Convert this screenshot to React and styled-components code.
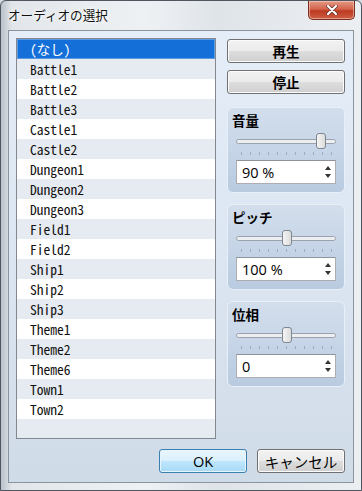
import React from 'react'
import styled, { createGlobalStyle } from 'styled-components'

const GlobalStyle = createGlobalStyle`
  html, body {
    margin: 0;
    padding: 0;
    background: #d4d9df;
  }
  * {
    box-sizing: border-box;
  }
`

const ui = `"Noto Sans CJK JP", "Noto Sans", sans-serif`
const latin = `"Open Sans", "Noto Sans", "Noto Sans CJK JP", sans-serif`

const Window = styled.div`
  width: 362px;
  height: 491px;
  display: flex;
  flex-direction: column;
  border: 1px solid #4f565f;
  border-radius: 6px 6px 0 0;
  background: linear-gradient(90deg, #b9c1ca 0%, #e2e6ea 3%, #eef1f4 40%, #dfe4e9 60%, #eceff2 100%);
  font-family: ${ui};
`

const TitleBar = styled.div`
  height: 29px;
  display: flex;
  align-items: flex-start;
  padding-left: 7px;
`

const Title = styled.div`
  margin-top: 6px;
  font-size: 12.6px;
  line-height: 16px;
  color: #111;
  text-shadow: 0 0 6px #fff, 0 0 3px #fff;
`

const CloseButton = styled.div`
  margin-left: auto;
  margin-right: 6px;
  width: 47px;
  height: 19px;
  border: 1px solid #7a2e24;
  border-top: none;
  border-radius: 0 0 5px 5px;
  background: linear-gradient(#e49a86 0%, #d4644d 45%, #bd3a22 55%, #cc5f44 100%);
  box-shadow: inset 0 0 0 1px rgba(255, 220, 210, 0.5);
  display: flex;
  align-items: center;
  justify-content: center;
`

const Client = styled.div`
  margin: 0 7px 7px 7px;
  flex: 1;
  border: 1px solid #8b939d;
  background: linear-gradient(#e4edf8 0%, #dce6f2 50%, #d0dbe8 100%);
  padding: 7px 8px 0 7px;
  display: flex;
  flex-direction: column;
`

const Main = styled.div`
  display: flex;
  gap: 11px;
`

const List = styled.div`
  width: 200px;
  height: 401px;
  border: 1px solid #828790;
  background: #e6ebf1;
  display: flex;
  flex-direction: column;
  overflow: hidden;
`

const Row = styled.div`
  height: 20px;
  flex-shrink: 0;
  padding-left: 13px;
  display: flex;
  align-items: center;
  font-family: "Noto Sans Mono CJK JP", "DejaVu Sans Mono", monospace;
  font-size: 13.5px;
  color: ${p => (p.$selected ? '#fff' : '#111')};
  background: ${p => (p.$selected ? '#1470d8' : p.$odd ? '#e6ebf2' : '#ffffff')};
  box-shadow: ${p => (p.$selected ? 'inset 0 0 0 1px #5a9be3' : 'none')};
`

const Side = styled.div`
  width: 118px;
  padding-top: 1px;
  display: flex;
  flex-direction: column;
`

const Button = styled.div`
  height: 24px;
  display: flex;
  align-items: center;
  justify-content: center;
  border: 1px solid #707070;
  border-radius: 3px;
  background: linear-gradient(#f2f2f2 0%, #ebebeb 48%, #dddddd 52%, #cfcfcf 100%);
  box-shadow: inset 0 0 0 1px #fbfbfb;
  font-family: ${p => (p.$latin ? latin : ui)};
  font-size: ${p => (p.$latin ? '14.5px' : '13.5px')};
  font-weight: ${p => (p.$bold ? 700 : 400)};
  color: #000;
  margin-bottom: ${p => p.$mb || 0}px;
  width: ${p => (p.$w ? `${p.$w}px` : 'auto')};
`

const DefaultButton = styled(Button)`
  border-color: #3c7fb1;
  background: linear-gradient(#eaf6fd 0%, #d9f0fc 48%, #bee6fd 52%, #a7d9f5 100%);
  box-shadow: inset 0 0 0 1px #e6f4fc;
`

const Group = styled.div`
  height: 86px;
  margin-top: ${p => p.$mt}px;
  border: 1px solid #e9eff7;
  border-radius: 6px;
  background: linear-gradient(#d3deec 0%, #c6d5e7 50%, #b9cbe0 100%);
  padding: 3px 8px 0 8px;
  display: flex;
  flex-direction: column;
`

const GroupLabel = styled.div`
  font-size: 13.5px;
  font-weight: 700;
  line-height: 18px;
  color: #000;
  margin-left: -4px;
`

const SliderBox = styled.div`
  position: relative;
  height: 16px;
  margin-top: 4px;
  display: flex;
  align-items: center;
`

const Track = styled.div`
  width: 100%;
  height: 5px;
  border: 1px solid #9aa3ad;
  border-radius: 3px;
  background: #eceeef;
`

const Thumb = styled.div`
  position: absolute;
  top: 0;
  width: 10px;
  height: 16px;
  border: 1px solid #7d8792;
  border-radius: 3px;
  background: linear-gradient(90deg, #f4f4f4, #dcdcdc);
`

const Ticks = styled.div`
  height: 3px;
  margin: 3px 4px 0 5px;
  background: repeating-linear-gradient(90deg, #a3acb6 0 1px, transparent 1px 9px);
`

const Spin = styled.div`
  height: 24px;
  margin-top: 5px;
  border: 1px solid #abadb3;
  border-top-color: #8e9399;
  background: #fff;
  display: flex;
  align-items: center;
  padding-left: 5px;
  font-family: ${latin};
  font-size: 14.5px;
  color: #000;
`

const SpinArrows = styled.div`
  margin-left: auto;
  width: 14px;
  height: 22px;
  display: flex;
  flex-direction: column;
  align-items: center;
  justify-content: center;
  gap: 4px;
`

const Arrow = styled.div`
  width: 0;
  height: 0;
  border-left: 3px solid transparent;
  border-right: 3px solid transparent;
  border-bottom: ${p => (p.$up ? '4px solid #333' : 'none')};
  border-top: ${p => (p.$up ? 'none' : '4px solid #333')};
`

const Footer = styled.div`
  margin-top: 10px;
  display: flex;
  justify-content: flex-end;
  gap: 10px;
`

const items = [
  '(なし)', 'Battle1', 'Battle2', 'Battle3', 'Castle1', 'Castle2',
  'Dungeon1', 'Dungeon2', 'Dungeon3', 'Field1', 'Field2',
  'Ship1', 'Ship2', 'Ship3', 'Theme1', 'Theme2', 'Theme6', 'Town1', 'Town2',
]

const groups = [
  { label: '音量', value: '90 %', pos: 0.89, mt: 13 },
  { label: 'ピッチ', value: '100 %', pos: 0.51, mt: 11 },
  { label: '位相', value: '0', pos: 0.51, mt: 11 },
]

const Slider = ({ pos }) => (
  <SliderBox>
    <Track />
    <Thumb style={{ left: `${pos * 90}px` }} />
  </SliderBox>
)

const App = () => (
  <>
    <GlobalStyle />
    <Window>
      <TitleBar>
        <Title>オーディオの選択</Title>
        <CloseButton>
          <svg width="12" height="10" viewBox="0 0 12 10">
            <path d="M2 1 L10 9 M10 1 L2 9" stroke="#5a2a22" strokeWidth="3.4" strokeLinecap="round" />
            <path d="M2 1 L10 9 M10 1 L2 9" stroke="#fff" strokeWidth="2.2" strokeLinecap="round" />
          </svg>
        </CloseButton>
      </TitleBar>
      <Client>
        <Main>
          <List>
            {items.map((name, i) => (
              <Row key={name} $selected={i === 0} $odd={i % 2 === 1}>{name}</Row>
            ))}
          </List>
          <Side>
            <Button $bold $mb={7}>再生</Button>
            <Button $bold>停止</Button>
            {groups.map(g => (
              <Group key={g.label} $mt={g.mt}>
                <GroupLabel>{g.label}</GroupLabel>
                <Slider pos={g.pos} />
                <Ticks />
                <Spin>
                  {g.value}
                  <SpinArrows>
                    <Arrow $up />
                    <Arrow />
                  </SpinArrows>
                </Spin>
              </Group>
            ))}
          </Side>
        </Main>
        <Footer>
          <DefaultButton $latin $w={88}>OK</DefaultButton>
          <Button $latin $w={88}>キャンセル</Button>
        </Footer>
      </Client>
    </Window>
  </>
)

export default App
